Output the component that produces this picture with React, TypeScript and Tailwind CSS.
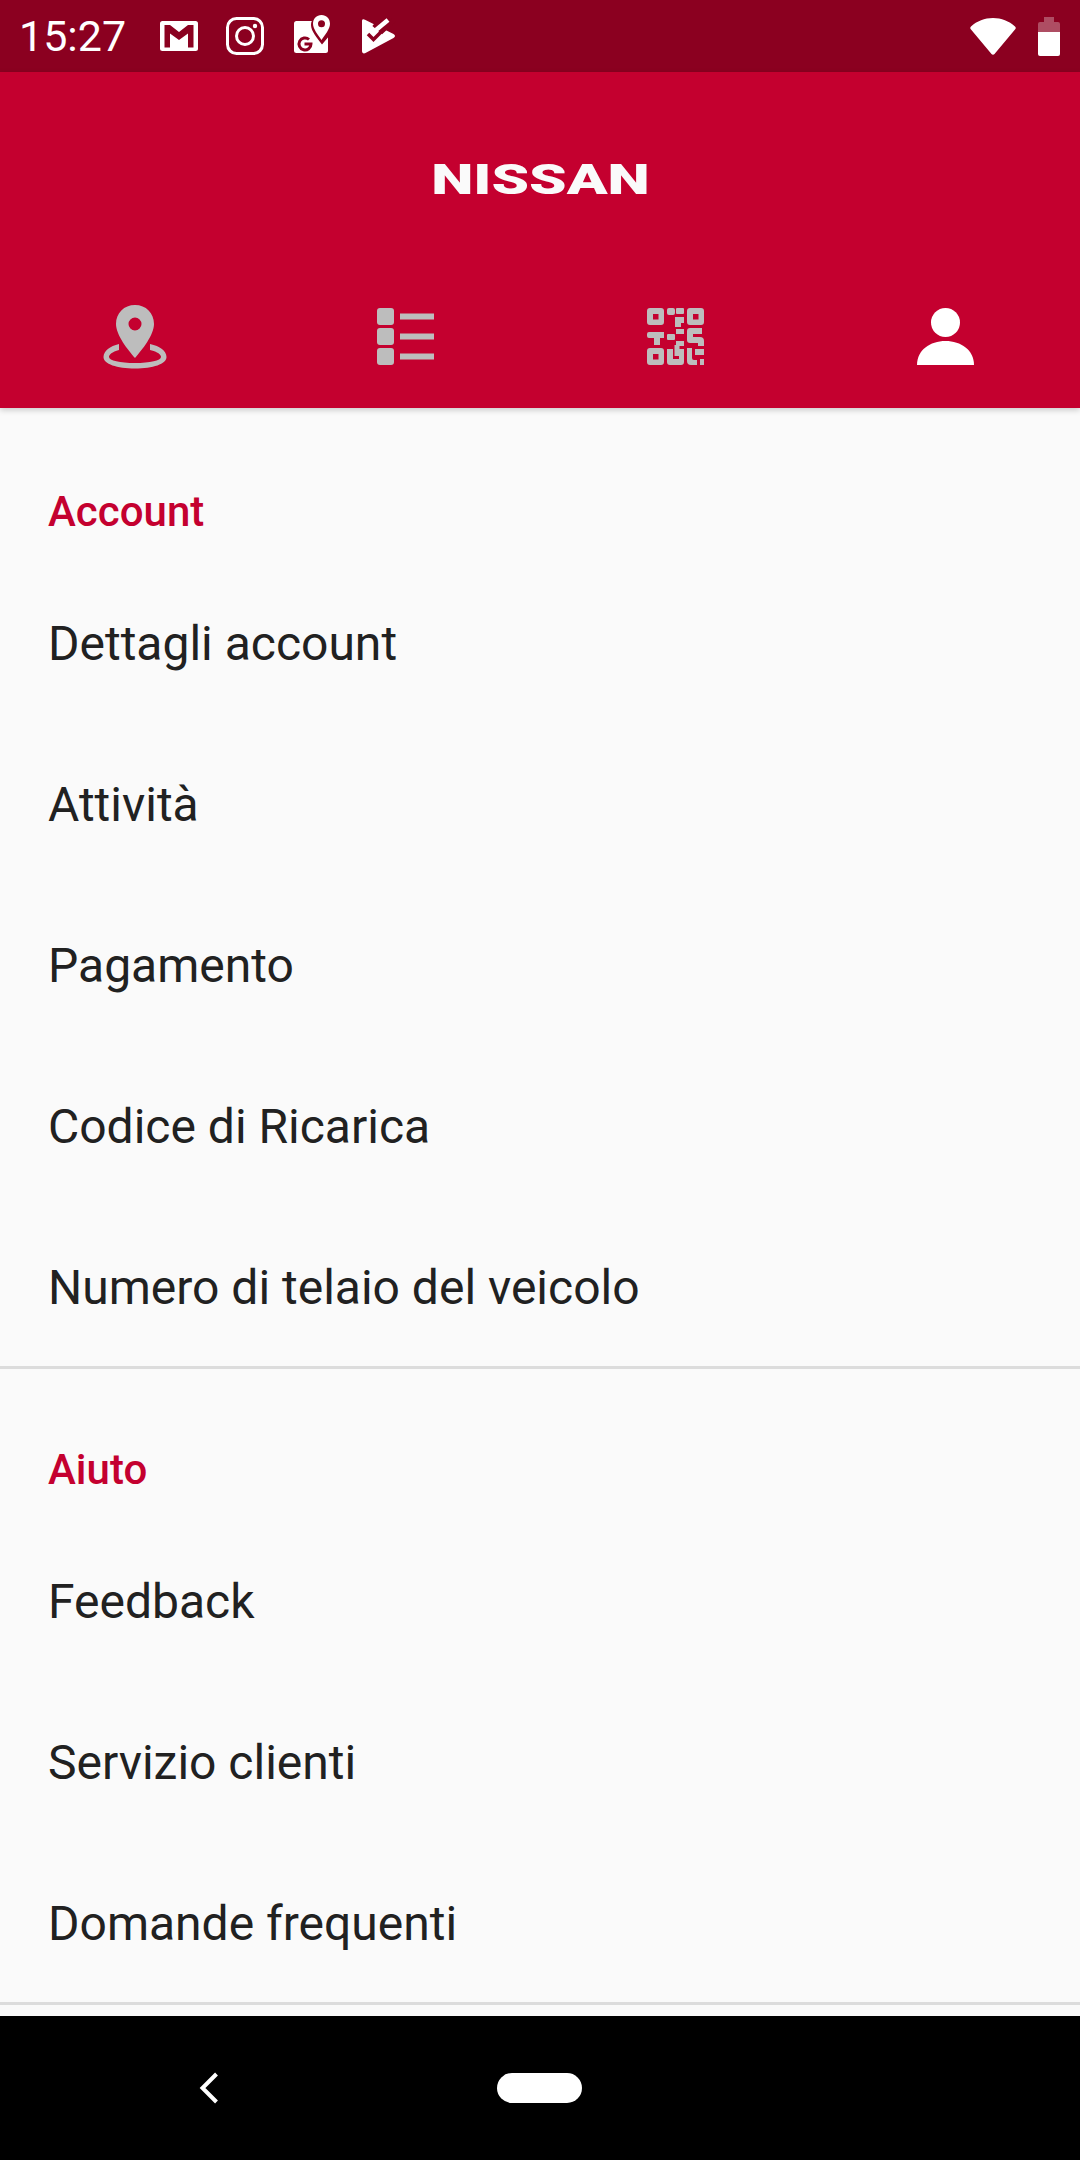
const Gmail = () => (
  <svg width="38" height="30" viewBox="0 0 38 30" className="block">
    <rect width="38" height="30" rx="2.500" fill="#fff" />
    <path fill="#8b0020" d="M4.500 4H10L19 11 28 4H33.500V26.500H28V12.500L19 19 10 12.500V26.500H4.500Z" />
  </svg>
);

const Instagram = () => (
  <svg width="38" height="38" viewBox="0 0 38 38" className="block">
    <rect x="1.500" y="1.500" width="35" height="35" rx="9" fill="none" stroke="#fff" strokeWidth="3" />
    <circle cx="19" cy="19" r="8.500" fill="none" stroke="#fff" strokeWidth="3" />
    <circle cx="29" cy="9" r="2.200" fill="#fff" />
  </svg>
);

const Maps = () => (
  <svg width="36" height="38" viewBox="0 0 36 38" className="block">
    <rect x="0" y="6" width="34" height="32" rx="2.500" fill="#fff" />
    <path fill="#8b0020" d="M28 0C22 0 17 4 17 10C17 16 23 23 28 29.500L36 20V0Z" />
    <path fillRule="evenodd" fill="#fff" d="M27.500 0C22.500 0 19 3.800 19 8.800C19 14 24 20 27.500 25C31 20 36 14 36 8.800C36 3.800 32.500 0 27.500 0ZM27.500 5.300a3.500 3.500 0 1 1 0 7a3.500 3.500 0 0 1 0-7Z" />
    <path fill="none" stroke="#8b0020" strokeWidth="3" d="M15 24.500a6 6 0 1 0 2 4.500H10.500" />
  </svg>
);

const Play = () => (
  <svg width="34" height="36" viewBox="0 0 34 36" className="block">
    <path fill="#fff" d="M0 3C0 1 1.500 .8 3 1.800L31.500 16C33.500 17 33.500 19 31.500 20L3.500 35C1.500 36 0 35 0 33Z" />
    <path fill="none" stroke="#8b0020" strokeWidth="5" d="M12 6 20 13 34 0" />
    <path fill="none" stroke="#fff" strokeWidth="4.500" strokeLinecap="butt" d="M14 12 26 2" />
    <path fill="none" stroke="#8b0020" strokeWidth="3.500" d="M6 16 11.500 21.500 23 10" />
  </svg>
);

const Wifi = () => (
  <svg width="46" height="37" viewBox="0 0 46 37" className="block">
    <path fill="#fff" d="M1 8.500C7 3 14.500 0 23 0S39 3 45 8.500C46 9.500 46 10.500 45 11.500L24.500 36C23.700 37 22.300 37 21.500 36L1 11.500C0 10.500 0 9.500 1 8.500Z" />
  </svg>
);

const Battery = () => (
  <svg width="22" height="39" viewBox="0 0 22 39" className="block">
    <path fill="#fff" fillOpacity="0.3" d="M6 0H16V5H20a2 2 0 0 1 2 2V15H0V7a2 2 0 0 1 2-2H6Z" />
    <path fill="#fff" d="M0 15H22V37a2 2 0 0 1-2 2H2a2 2 0 0 1-2-2Z" />
  </svg>
);

const Pin = () => (
  <svg width="64" height="64" viewBox="0 0 64 64" className="block" fill="#bdbdbd">
    <path fillRule="evenodd" d="M32 0C21 0 13 8 13 19C13 30 25 45 32 53C39 45 51 30 51 19C51 8 43 0 32 0ZM32 12.500a6.500 6.500 0 1 1 0 13a6.500 6.500 0 0 1 0-13Z" />
    <path d="M16 39V45C9 47 6 49.500 6 52C6 55.500 17 58 32 58S58 55.500 58 52C58 49.500 55 47 47 45V39C57 41 63.500 46 63.500 52C63.500 59 50 63.500 32 63.500S.5 59 .5 52C.5 46 7 41 16 39Z" />
  </svg>
);

const ListIcon = () => (
  <svg width="57" height="57" viewBox="0 0 57 57" className="block" fill="#bdbdbd">
    <rect x="0" y="0" width="17" height="17" rx="3" />
    <rect x="0" y="20" width="17" height="17" rx="3" />
    <rect x="0" y="40" width="17" height="17" rx="3" />
    <rect x="23" y="5.500" width="34" height="6" />
    <rect x="23" y="25.500" width="34" height="6" />
    <rect x="23" y="45.500" width="34" height="6" />
  </svg>
);

const Qr = () => (
  <svg width="57" height="57" viewBox="0 0 57 57" className="block" fill="#bdbdbd">
    <path fillRule="evenodd" d="M3 0H14a3 3 0 0 1 3 3V14a3 3 0 0 1-3 3H3a3 3 0 0 1-3-3V3a3 3 0 0 1 3-3ZM6 6V11.500H11.500V6Z" />
    <path fillRule="evenodd" d="M43 0H54a3 3 0 0 1 3 3V14a3 3 0 0 1-3 3H43a3 3 0 0 1-3-3V3a3 3 0 0 1 3-3ZM46 6V11.500H51.500V6Z" />
    <path fillRule="evenodd" d="M3 40H14a3 3 0 0 1 3 3V54a3 3 0 0 1-3 3H3a3 3 0 0 1-3-3V43a3 3 0 0 1 3-3ZM6 46V51.500H11.500V46Z" />
    <rect x="20" y="0" width="8" height="7" rx="2" />
    <rect x="29" y="0" width="8" height="6" rx="1" />
    <path d="M28 9H37V15H34V19H28Z" />
    <path d="M2 24H17V30H13V37H7V30H2a2 2 0 0 1-2-2V26a2 2 0 0 1 2-2Z" />
    <rect x="20" y="26" width="8" height="6" rx="1" />
    <rect x="29" y="21" width="8" height="5" />
    <rect x="29" y="33" width="8" height="5" />
    <path d="M43 20H55V26H46V29H53a4 4 0 0 1 4 4V38H51V35H43a3 3 0 0 1-3-3V23a3 3 0 0 1 3-3Z" />
    <path d="M20 41H26V51H32V41H37V54a3 3 0 0 1-3 3H23a3 3 0 0 1-3-3Z" />
    <path d="M27.500 37H32.500V48H27.500Z" />
    <path d="M40 40H45V50a2 2 0 0 0 2 2H50V57H44a4 4 0 0 1-4-4Z" />
    <rect x="48" y="41" width="9" height="6" />
    <rect x="53" y="51" width="4" height="6" />
  </svg>
);

const Person = () => (
  <svg width="57" height="57" viewBox="0 0 57 57" className="block" fill="#fff">
    <circle cx="28.500" cy="14.500" r="14.500" />
    <path d="M0 57C0 42 13 33 28.500 33S57 42 57 57Z" />
  </svg>
);

const Section = ({ title, items, headClass }: { title: string; items: string[]; headClass: string }) => (
  <section className="border-b-[3px] border-[#dcdcdc]">
    <h2 className={headClass}>{title}</h2>
    {items.map((item) => (
      <div key={item} className="h-[161px] pl-[48px] pt-[4px] flex items-center text-[48px] leading-[58px] text-[#212121]">
        {item}
      </div>
    ))}
  </section>
);

export default function App() {
  return (
    <div className="w-[1080px] h-[2160px] flex flex-col overflow-hidden bg-[#fafafa] font-['Roboto',sans-serif]">
      <div className="h-[72px] shrink-0 bg-[#8b0020] flex items-center pl-[19px] pr-[20px] text-white">
        <span className="text-[43px] leading-[48px] w-[141px]">15:27</span>
        <div className="flex items-center">
          <div><Gmail /></div>
          <div className="ml-[28px]"><Instagram /></div>
          <div className="ml-[30px] -mt-[5px]"><Maps /></div>
          <div className="ml-[32px]"><Play /></div>
        </div>
        <div className="ml-auto flex items-center gap-[22px]">
          <Wifi />
          <Battery />
        </div>
      </div>

      <header className="h-[336px] shrink-0 bg-[#c4002f] flex flex-col relative z-10 shadow-[0_2px_6px_rgba(0,0,0,0.2)]">
        <div className="h-[216px] flex items-center justify-center">
          <span className="text-[42px] leading-none font-black text-[#fafafa] scale-x-[1.43]">NISSAN</span>
        </div>
        <nav className="grid grid-cols-4">
          <div className="flex justify-center pt-[17px]"><Pin /></div>
          <div className="flex justify-center pt-[20px]"><ListIcon /></div>
          <div className="flex justify-center pt-[20px]"><Qr /></div>
          <div className="flex justify-center pt-[20px]"><Person /></div>
        </nav>
      </header>

      <main className="flex-1 overflow-hidden pt-[2px]">
        <Section
          title="Account"
          headClass="pl-[48px] pt-[77px] h-[151px] text-[42px] leading-[50px] font-medium text-[#c4002f]"
          items={["Dettagli account", "Attività", "Pagamento", "Codice di Ricarica", "Numero di telaio del veicolo"]}
        />
        <Section
          title="Aiuto"
          headClass="pl-[48px] pt-[76px] h-[150px] text-[42px] leading-[50px] font-medium text-[#c4002f]"
          items={["Feedback", "Servizio clienti", "Domande frequenti"]}
        />
      </main>

      <div className="h-[144px] shrink-0 bg-black flex items-center">
        <svg width="20" height="32" viewBox="0 0 20 32" className="block ml-[199px]">
          <path d="M17.500 2 3.500 16 17.500 30" fill="none" stroke="#fff" strokeWidth="4" />
        </svg>
        <div className="ml-[278px] w-[85px] h-[30px] rounded-full bg-white" />
      </div>
    </div>
  );
}
